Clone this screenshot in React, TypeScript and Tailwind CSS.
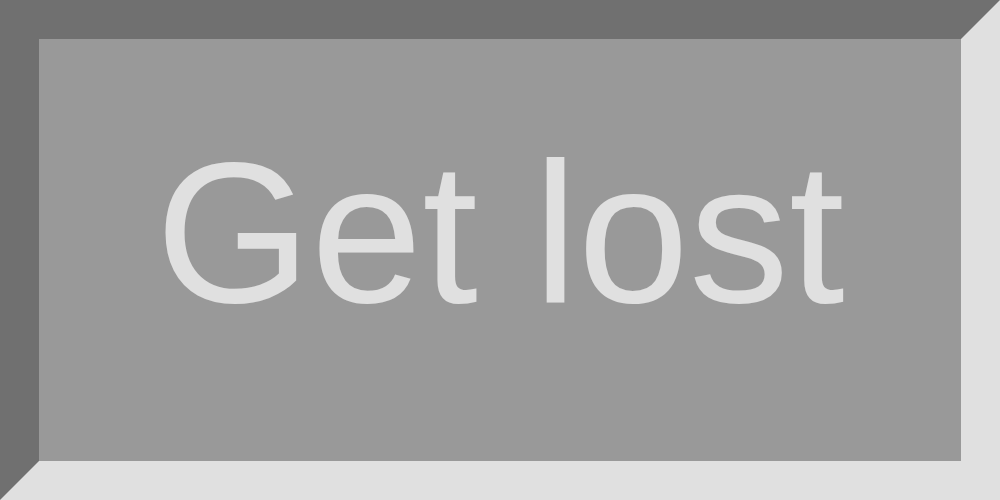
export default function App() {
  return (
    <div className="w-[1000px] h-[500px] bg-[#999999] border-[39px] border-t-[#707070] border-l-[#707070] border-b-[#e0e0e0] border-r-[#e0e0e0] flex items-center justify-center">
      <span className="mb-[34px] text-[200px] text-[#e0e0e0] font-['Liberation_Sans',Arial,sans-serif] whitespace-nowrap">
        Get lost
      </span>
    </div>
  );
}
